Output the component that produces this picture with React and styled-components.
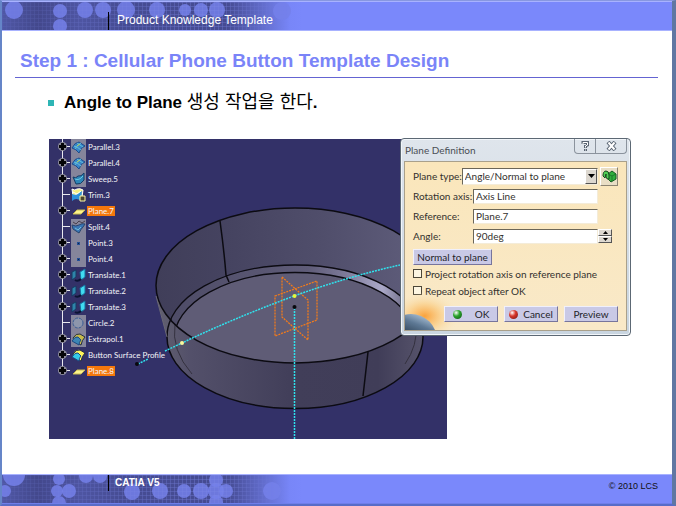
import React, { useState } from "react";
import styled, { createGlobalStyle } from "styled-components";

const treeItems = [
  { name: "Parallel.3", icon: "surface", node: true },
  { name: "Parallel.4", icon: "surface", node: true },
  { name: "Sweep.5", icon: "sweep", node: true },
  { name: "Trim.3", icon: "trim" },
  { name: "Plane.7", icon: "plane", node: true, selected: true },
  { name: "Split.4", icon: "split" },
  { name: "Point.3", icon: "point", node: true },
  { name: "Point.4", icon: "point", node: true },
  { name: "Translate.1", icon: "translate", node: true },
  { name: "Translate.2", icon: "translate", node: true },
  { name: "Translate.3", icon: "translate", node: true },
  { name: "Circle.2", icon: "circle" },
  { name: "Extrapol.1", icon: "extrapol", node: true },
  { name: "Button Surface Profile", icon: "profile", node: true },
  { name: "Plane.8", icon: "plane", node: true, selected: true },
];

const grayIcons = ["surface", "sweep", "split", "point", "circle", "extrapol"];

const headerDots = [
  [12, 8, 9], [58, 9, 7], [58, 24, 7], [83, 8, 8], [101, 8, 8], [124, 8, 9],
  [155, 8, 8], [183, 8, 6], [199, 8, 7], [215, 8, 8], [280, 9, 9],
];

const footerDots = [
  [12, 0, 11], [3, 16, 6], [57, 4, 6], [55, 16, 6], [67, 16, 7], [57, 28, 7],
  [84, 1, 7], [98, 1, 7], [130, 17, 8], [158, 16, 8], [182, 16, 7],
  [199, 16, 8], [214, 5, 7], [214, 16, 8], [214, 27, 7], [224, 16, 7],
  [270, 16, 9],
];

const BandArt = ({ id, dots }) => (
  <Art width="300" height="28" viewBox="0 0 300 28" aria-hidden="true">
    <defs>
      <linearGradient id={`${id}Fade`}>
        <stop offset="0" stopColor="#5058a6" />
        <stop offset="0.12" stopColor="#43488c" />
        <stop offset="0.26" stopColor="#4e55a2" />
        <stop offset="0.4" stopColor="#464c93" />
        <stop offset="0.75" stopColor="#454b92" />
        <stop offset="0.96" stopColor="#7886f8" />
        <stop offset="1" stopColor="#7a88fb" />
      </linearGradient>
      <linearGradient id={`${id}GridFade`}>
        <stop offset="0" stopColor="#fff" stopOpacity="0.2" />
        <stop offset="0.3" stopColor="#fff" stopOpacity="0.4" />
        <stop offset="0.7" stopColor="#fff" stopOpacity="0.8" />
        <stop offset="0.95" stopColor="#fff" stopOpacity="0" />
      </linearGradient>
      <pattern id={`${id}Grid`} width="4" height="4" patternUnits="userSpaceOnUse">
        <path d="M0 .5H4M.5 0V4" stroke="#7c88e4" strokeOpacity="0.45" />
      </pattern>
      <mask id={`${id}Mask`}>
        <rect width="300" height="28" fill={`url(#${id}GridFade)`} />
      </mask>
    </defs>
    <rect width="300" height="28" fill={`url(#${id}Fade)`} />
    <g fill="#7480ea" fillOpacity="0.85">
      {dots.map(([x, y, r]) => (
        <circle key={`${x}-${y}`} cx={x} cy={y} r={r} />
      ))}
    </g>
    <rect width="300" height="28" fill={`url(#${id}Grid)`} mask={`url(#${id}Mask)`} />
  </Art>
);

const TreeIcon = ({ type }) => (
  <svg width="15" height="16" viewBox="0 0 15 16" aria-hidden="true">
    {grayIcons.includes(type) && <rect width="15" height="16" fill="#85859b" />}
    {type === "surface" && (
      <>
        <path d="M1 9Q4 3 8 3L14 7Q10 8 8 14Q5 10 1 9Z" fill="#3a86c8" stroke="#1d4b8c" />
        <path d="M3 7Q7 8 10 11M6 4Q9 6 12 8M4 10Q6 6 10 4" fill="none" stroke="#65c0d8" />
        <path d="M6 7L9 5" stroke="#b9d253" />
      </>
    )}
    {type === "sweep" && (
      <>
        <path d="M2 6Q5 8 7 5Q10 6 13 2L13 9Q10 14 5 13Z" fill="#2d86b8" stroke="#153c66" />
        <path d="M4 8Q8 10 12 5" fill="none" stroke="#68c9e4" />
      </>
    )}
    {type === "trim" && (
      <>
        <path d="M1 2Q4 4 6 2Q9 1 12 3L11 10Q6 6 2 9Z" fill="#f4ef80" stroke="#fff" />
        <path d="M1 7L5 8L11 4L10 14Q5 10 1 14Z" fill="#2e91dc" />
        <path d="M2 5L6 7L10 4" fill="none" stroke="#fff" />
        <path d="M9 9H14V14H9Z" fill="#4b4630" stroke="#fff8a3" />
      </>
    )}
    {type === "plane" && <path d="M2 11L6 7H14L10 11Z" fill="#faf38c" stroke="#c8b952" />}
    {type === "split" && (
      <>
        <path d="M1 6Q5 8 8 6T14 5L12 8Q10 10 8 14L2 10Z" fill="#3976b5" stroke="#28446e" />
        <path d="M2 3L5 5L8 2L11 4L14 2" fill="none" stroke="#48404c" />
        <path d="M4 9L7 11L10 8" fill="none" stroke="#75bed7" />
      </>
    )}
    {type === "point" && (
      <>
        <rect x="6" y="7" width="3" height="3" fill="#244f96" />
        <rect x="7" y="8" width="1" height="1" fill="#10203c" />
      </>
    )}
    {type === "translate" && (
      <>
        <path d="M1 5L5 3V10L1 13Z" fill="#2e84a9" stroke="#173b63" />
        <path d="M9 5L14 2V10L10 13Z" fill="#41dcf0" stroke="#196f9e" />
        <path d="M4 13Q7 15 10 12" fill="none" stroke="#0c1434" strokeWidth="2" />
      </>
    )}
    {type === "circle" && (
      <circle cx="7" cy="8" r="5" fill="#8d96ac" stroke="#3a5c94" strokeDasharray="3 1" />
    )}
    {(type === "extrapol" || type === "profile") && (
      <>
        <path
          d="M2 7Q5 2 9 3L14 6Q11 9 10 14L4 11Z"
          fill={type === "profile" ? "#fff35b" : "#c6ba4b"}
          stroke="#232c45"
        />
        <path
          d="M1 10Q4 5 7 6L10 9Q8 11 8 14Z"
          fill={type === "profile" ? "#35cce8" : "#3c86b5"}
          stroke="#1d4a83"
        />
      </>
    )}
  </svg>
);

const NodeMark = ({ open }) => (
  <svg width="15" height="16" viewBox="0 0 15 16" aria-hidden="true">
    <path d="M6 7.500H14" stroke="#e9e9ef" />
    {open && (
      <>
        <circle cx="6.500" cy="7.500" r="4.500" fill="#8b8a98" />
        <path d="M6.500 4V11M3 7.500H10" stroke="#050508" strokeWidth="3" />
      </>
    )}
  </svg>
);

// the drawing uses slide coordinates, so the view box starts at the viewport's corner
const PartDrawing = () => (
  <Drawing viewBox="49 139 398 300" role="img" aria-label="Round part with two construction planes">
    <defs>
      <linearGradient id="outerWall">
        <stop offset="0" stopColor="#62606f" />
        <stop offset="0.12" stopColor="#53506a" />
        <stop offset="0.5" stopColor="#413e59" />
        <stop offset="0.8" stopColor="#403d58" />
        <stop offset="1" stopColor="#5b586f" />
      </linearGradient>
      <linearGradient id="innerWall">
        <stop offset="0" stopColor="#403e59" />
        <stop offset="0.25" stopColor="#454360" />
        <stop offset="0.6" stopColor="#504e6b" />
        <stop offset="1" stopColor="#615f7d" />
      </linearGradient>
      <linearGradient id="fillet">
        <stop offset="0" stopColor="#4d4b66" />
        <stop offset="0.55" stopColor="#5f5c78" />
        <stop offset="0.7" stopColor="#7d7a99" />
        <stop offset="0.84" stopColor="#aaa8c8" />
        <stop offset="0.92" stopColor="#77748f" />
        <stop offset="1" stopColor="#555269" />
      </linearGradient>
      <clipPath id="opening">
        <ellipse cx="295" cy="285.500" rx="139" ry="77.500" />
      </clipPath>
    </defs>
    <rect x="49" y="139" width="398" height="300" fill="#333168" />
    <path d="M157 299L167 337A128 71.500 0 0 0 423 337L433 299Z" fill="url(#outerWall)" />
    <ellipse cx="295" cy="285.500" rx="139" ry="77.500" fill="url(#innerWall)" />
    <path d="M175 324Q171 350 192 374M416 325Q418 345 405 364" fill="none" stroke="#34313f" />
    <g clipPath="url(#opening)" stroke="#0c0b12" strokeWidth="1.300">
      <ellipse cx="295" cy="336.500" rx="128" ry="71.500" fill="url(#fillet)" />
      <ellipse cx="295" cy="339.500" rx="121" ry="67" fill="#5f5c76" />
    </g>
    <g fill="none" stroke="#0c0b12" strokeWidth="1.500">
      <ellipse cx="295" cy="285.500" rx="139" ry="77.500" />
      <path d="M171 319Q167 327 167 337A128 71.500 0 0 0 423 337Q423 326 419 319" />
      <path d="M220 221Q224 250 226 275L229 282M368 352L363 396" />
    </g>
    <path d="M156 296L167 337" stroke="#6a6874" />
    <g fill="none" stroke="#f07a1c" strokeWidth="1.300" strokeDasharray="2 1">
      <path d="M275 296L317 281V320L275 336Z" />
      <path d="M282 277L308 300V340L282 317Z" />
    </g>
    <g fill="none" stroke="#2fe3ee" strokeWidth="1.500" strokeDasharray="2 1">
      <path d="M138 364L148 359M165 351L182 343Q232 319 294 296Q350 276 400 265" />
      <path d="M294.500 308V439" />
    </g>
    <circle cx="137" cy="364" r="2" fill="#08080c" />
    <circle cx="294.500" cy="307" r="2" fill="#08080c" />
    <circle cx="182" cy="343" r="2" fill="#fbfb9c" />
    <circle cx="294.500" cy="296" r="2" fill="#e6f83c" />
  </Drawing>
);

const PlaneDialog = () => {
  const [axis, setAxis] = useState("Axis Line");
  const [reference, setReference] = useState("Plane.7");
  const [angle, setAngle] = useState(90);

  return (
    <Dialog role="dialog" aria-labelledby="dialogTitle">
      <TitleBar>
        <DialogTitle id="dialogTitle">Plane Definition</DialogTitle>
        <WindowButtons>
          <WindowButton aria-label="Help">
            <svg width="9" height="12" viewBox="0 0 9 12">
              <path d="M2 4V2.500H6.500V5L4.500 6V8M4.500 9V11" fill="none" stroke="#596472" strokeWidth="3" />
              <path d="M2 4V2.500H6.500V5L4.500 6V7.500M4.500 9.500V10.500" fill="none" stroke="#fff" />
            </svg>
          </WindowButton>
          <WindowButton aria-label="Close">
            <svg width="11" height="10" viewBox="0 0 11 10">
              <path d="M2 1L9 9M9 1L2 9" stroke="#596472" strokeWidth="4" />
              <path d="M2.500 1.500L8.500 8.500M8.500 1.500L2.500 8.500" stroke="#fff" strokeWidth="2" />
            </svg>
          </WindowButton>
        </WindowButtons>
      </TitleBar>
      <DialogBody onSubmit={(e) => e.preventDefault()}>
        <Glow width="56" height="40" viewBox="0 0 56 40" aria-hidden="true">
          <defs>
            <radialGradient id="sunrise" cx="0.35" cy="0.65" r="0.6">
              <stop offset="0" stopColor="#f9a23c" />
              <stop offset="0.5" stopColor="#fad08c" stopOpacity="0.8" />
              <stop offset="1" stopColor="#f9e5bd" stopOpacity="0" />
            </radialGradient>
            <linearGradient id="planet" x1="0.7" y1="0" x2="0.3" y2="1">
              <stop offset="0" stopColor="#a9c0d6" />
              <stop offset="0.2" stopColor="#5d7894" />
              <stop offset="0.6" stopColor="#10202f" />
            </linearGradient>
          </defs>
          <rect width="56" height="40" fill="url(#sunrise)" />
          <circle cx="6" cy="50" r="26" fill="url(#planet)" />
        </Glow>
        <FieldRow>
          <FieldLabel htmlFor="planeType" $compact>Plane type:</FieldLabel>
          <SelectBox>
            <Select id="planeType" defaultValue="angle">
              <option value="angle">Angle/Normal to plane</option>
              <option value="offset">Offset from plane</option>
            </Select>
            <Arrow>
              <svg width="7" height="4" viewBox="0 0 7 4"><path d="M0 0H7L3.500 4Z" /></svg>
            </Arrow>
          </SelectBox>
          <ToolButton type="button" aria-label="Toggle axis">
            <svg width="15" height="14" viewBox="0 0 15 14">
              <path d="M6 5L10 2L14 5V10L9 13L6 10Z" fill="#2fae3c" stroke="#125b1f" />
              <path d="M6 5L10 7L14 5M10 7V12" fill="none" stroke="#1d7a2b" />
              <path d="M1 7Q1 2 4 2T7 6V10Q5 11 4 8V5L3 9Z" fill="#4fcf55" stroke="#17471f" />
            </svg>
          </ToolButton>
        </FieldRow>
        <FieldRow>
          <FieldLabel htmlFor="axis">Rotation axis:</FieldLabel>
          <Field id="axis" value={axis} onChange={(e) => setAxis(e.target.value)} />
          <Spacer />
        </FieldRow>
        <FieldRow>
          <FieldLabel htmlFor="reference">Reference:</FieldLabel>
          <Field id="reference" value={reference} onChange={(e) => setReference(e.target.value)} />
          <Spacer />
        </FieldRow>
        <FieldRow>
          <FieldLabel htmlFor="angle">Angle:</FieldLabel>
          <Field
            id="angle"
            value={`${angle}deg`}
            onChange={(e) => setAngle(parseInt(e.target.value, 10) || 0)}
          />
          <Spinner>
            <SpinButton type="button" aria-label="Increase" onClick={() => setAngle(angle + 1)}>
              <svg width="5" height="3" viewBox="0 0 5 3"><path d="M0 3H5L2.500 0Z" /></svg>
            </SpinButton>
            <SpinButton type="button" aria-label="Decrease" onClick={() => setAngle(angle - 1)}>
              <svg width="5" height="3" viewBox="0 0 5 3"><path d="M0 0H5L2.500 3Z" /></svg>
            </SpinButton>
          </Spinner>
        </FieldRow>
        <NormalRow>
          <PushButton type="button" $wide>Normal to plane</PushButton>
        </NormalRow>
        <CheckLabel>
          <Check type="checkbox" />
          Project rotation axis on reference plane
        </CheckLabel>
        <CheckLabel>
          <Check type="checkbox" />
          Repeat object after OK
        </CheckLabel>
        <Actions>
          <PushButton type="submit"><Ball $color="#2ba42c" $edge="#0b4f10" />OK</PushButton>
          <PushButton type="button"><Ball $color="#d8362c" $edge="#70110d" $tight />Cancel</PushButton>
          <PushButton type="button">Preview</PushButton>
        </Actions>
      </DialogBody>
    </Dialog>
  );
};

const App = () => (
  <>
    <GlobalStyle />
    <Slide>
      <Header>
        <BandArt id="top" dots={headerDots} />
        <HeaderText>Product Knowledge Template</HeaderText>
      </Header>
      <Main>
        <Title>Step 1 : Cellular Phone Button Template Design</Title>
        <Bullet>
          <span>
            Angle to Plane <Korean lang="ko">생성 작업을 한다</Korean>.
          </span>
        </Bullet>
        <Figure>
          <Viewport>
            <PartDrawing />
            <Tree>
              {treeItems.map(({ name, icon, node, selected }) => (
                <TreeRow key={name}>
                  <NodeMark open={node} />
                  <TreeIcon type={icon} />
                  <TreeLabel $selected={selected}>{name}</TreeLabel>
                </TreeRow>
              ))}
            </Tree>
          </Viewport>
          <PlaneDialog />
        </Figure>
      </Main>
      <Footer>
        <BandArt id="bottom" dots={footerDots} />
        <FooterText>CATIA V5</FooterText>
        <Copyright>© 2010 LCS</Copyright>
      </Footer>
    </Slide>
  </>
);

export default App;

const GlobalStyle = createGlobalStyle`
  *, *::before, *::after {
    box-sizing: border-box;
  }
  body {
    margin: 0;
    font-family: "Liberation Sans", "Noto Sans CJK KR", sans-serif;
  }
`;

const Slide = styled.div`
  min-height: 100vh;
  display: flex;
  flex-direction: column;
  background: #fff;
  border: solid;
  border-width: 1px 4px 2px 2px;
  border-color: #8797e0 #6077a2 #586cc8 #6585c8;
`;

const Band = styled.div`
  display: grid;
  background: #7a88fb;
  border-top: 1px solid #a8b2ff;
  & > * {
    grid-row: 1;
  }
`;

const Header = styled(Band).attrs({ as: "header" })`
  grid-template-columns: 106px 1fr;
  border-bottom: 1px solid #a8b2ff;
`;

const Footer = styled(Band).attrs({ as: "footer" })`
  grid-template-columns: 106px 1fr auto;
  border-bottom: 1px solid #6f7eea;
`;

const Art = styled.svg`
  grid-column: 1 / 3;
  display: block;
`;

const HeaderText = styled.div`
  grid-column: 2;
  align-self: end;
  padding: 0 0 2px 8px;
  border-left: 1px solid #000;
  color: #fff;
  font-size: 12px;
  line-height: 16px;
`;

const FooterText = styled.div`
  grid-column: 2;
  align-self: start;
  padding-left: 6px;
  border-left: 1px solid #000;
  color: #fff;
  font-size: 10px;
  font-weight: bold;
  line-height: 16px;
`;

const Copyright = styled.div`
  grid-column: 3;
  align-self: start;
  padding-right: 14px;
  color: #111;
  font-size: 9px;
  line-height: 22px;
`;

const Main = styled.main`
  flex: 1;
  padding: 16px 14px 24px 13px;
`;

const Title = styled.h1`
  margin: 0;
  padding: 0 5px 2px;
  border-bottom: 1px solid #6464d2;
  color: #7a84f8;
  font-size: 19px;
  line-height: 28px;
`;

const Bullet = styled.div`
  display: flex;
  align-items: center;
  gap: 10px;
  margin: 13px 0 24px 33px;
  font-size: 17px;
  font-weight: bold;
  line-height: 24px;
  &::before {
    content: "";
    width: 6px;
    height: 6px;
    background: #2eb5b5;
  }
`;

const Korean = styled.span`
  font-family: "Noto Sans CJK KR", sans-serif;
  font-size: 18px;
  font-weight: 400;
  line-height: 1;
`;

const Figure = styled.section`
  position: relative;
  max-width: 582px;
  margin-left: 34px;
`;

const Viewport = styled.div`
  display: grid;
  max-width: 398px;
  background: #333168;
  & > * {
    grid-area: 1 / 1;
  }
`;

const Drawing = styled.svg`
  display: block;
  width: 100%;
`;

const Tree = styled.ul`
  justify-self: start;
  align-self: start;
  margin: 0;
  padding: 0 0 0 7px;
  list-style: none;
  background: linear-gradient(#e9e9ef, #e9e9ef) 13px 0 / 1px 232px no-repeat;
`;

const TreeRow = styled.li`
  display: flex;
  align-items: center;
  height: 16px;
`;

const TreeLabel = styled.span`
  margin-left: 1px;
  padding: 0 1px;
  background: ${(props) => (props.$selected ? "#f5780c" : "transparent")};
  color: #f4f4f8;
  font-family: Lato, sans-serif;
  font-size: 8px;
  line-height: 10px;
  white-space: nowrap;
`;

const Dialog = styled.div`
  position: absolute;
  top: -1px;
  right: 0;
  width: 231px;
  padding: 0 3px 4px;
  border: 1px solid #5c6874;
  border-radius: 4px;
  background: linear-gradient(#dfe5ec, #c9d5e0);
  box-shadow: inset 0 0 0 1px #f2f6fa;
  color: #33312e;
  font-family: Lato, sans-serif;
  font-size: 10px;
  line-height: 14px;
`;

const TitleBar = styled.div`
  display: flex;
  justify-content: space-between;
  align-items: flex-start;
`;

const DialogTitle = styled.h2`
  margin: 0;
  padding-left: 1px;
  font-size: 10px;
  font-weight: 400;
  line-height: 22px;
  color: #4a4e55;
`;

const WindowButtons = styled.div`
  display: flex;
  border: 1px solid #8b939d;
  border-top: 0;
  border-radius: 0 0 4px 4px;
`;

const WindowButton = styled.button`
  display: flex;
  align-items: center;
  justify-content: center;
  width: 20px;
  height: 14px;
  padding: 0;
  border: 0;
  background: transparent;
  & + & {
    width: 31px;
    border-left: 1px solid #8b939d;
  }
`;

const DialogBody = styled.form`
  position: relative;
  padding: 4px 8px 8px;
  border: 1px solid #a9a08b;
  background: linear-gradient(#fae6bb, #f9e9c8);
`;

const Glow = styled.svg`
  position: absolute;
  left: 0;
  bottom: 0;
`;

const FieldRow = styled.div`
  display: flex;
  align-items: center;
  min-height: 20px;
`;

const FieldLabel = styled.label`
  flex: 0 0 ${(props) => (props.$compact ? "48px" : "60px")};
  white-space: nowrap;
`;

const Field = styled.input`
  flex: 1;
  min-width: 0;
  height: 15px;
  padding: 0 2px;
  border: 1px solid;
  border-color: #6b6658 #f4ecd9 #f4ecd9 #6b6658;
  background: #fff;
  color: inherit;
  font: inherit;
  line-height: 13px;
`;

const SelectBox = styled.div`
  flex: 1;
  display: grid;
  grid-template-rows: 15px;
  border: 1px solid;
  border-color: #6b6658 #f4ecd9 #f4ecd9 #6b6658;
  background: #fff;
  & > * {
    grid-area: 1 / 1;
  }
`;

const Select = styled.select`
  appearance: none;
  min-width: 0;
  padding: 0 2px;
  border: 0;
  background: transparent;
  color: inherit;
  font: inherit;
`;

const Arrow = styled.span`
  justify-self: end;
  display: flex;
  align-items: center;
  justify-content: center;
  width: 12px;
  border: 1px solid;
  border-color: #fff #555 #555 #fff;
  background: #ddd8d0;
  pointer-events: none;
`;

const ToolButton = styled.button`
  display: flex;
  align-items: center;
  justify-content: center;
  width: 18px;
  height: 19px;
  margin-left: 2px;
  padding: 0;
  border: 1px solid;
  border-color: #fff #8c8472 #8c8472 #fff;
  background: #e9dec5;
`;

const Spacer = styled.span`
  width: 20px;
`;

const Spinner = styled.span`
  display: flex;
  flex-direction: column;
  width: 14px;
  margin-right: 6px;
`;

const SpinButton = styled.button`
  display: flex;
  align-items: center;
  justify-content: center;
  height: 7px;
  padding: 0;
  border: 1px solid;
  border-color: #fff #555 #555 #fff;
  background: #ddd8d0;
`;

const NormalRow = styled.div`
  display: flex;
  padding-top: 3px;
`;

const PushButton = styled.button`
  display: inline-flex;
  align-items: center;
  justify-content: center;
  width: ${(props) => (props.$wide ? "79px" : "54px")};
  height: 16px;
  padding: 0;
  border: 1px solid;
  border-color: #f0f0fc #77759c #77759c #f0f0fc;
  background: #c9c9e6;
  color: #1e1e28;
  font: inherit;
  line-height: 14px;
`;

const CheckLabel = styled.label`
  display: flex;
  align-items: center;
  gap: 3px;
  height: 17px;
  white-space: nowrap;
`;

const Check = styled.input`
  appearance: none;
  width: 9px;
  height: 9px;
  margin: 0;
  border: 1px solid #4c4738;
  background: #fdf6e2;
  &:checked {
    background: #4c4738;
  }
`;

const Actions = styled.div`
  position: relative;
  display: flex;
  justify-content: flex-end;
  gap: 6px;
  margin-top: 7px;
`;

const Ball = styled.span`
  width: 9px;
  height: 9px;
  margin-right: ${(props) => (props.$tight ? "5px" : "13px")};
  border-radius: 50%;
  background: radial-gradient(circle at 35% 30%, #fff, ${(props) => props.$color} 40%, ${(props) => props.$edge});
`;
